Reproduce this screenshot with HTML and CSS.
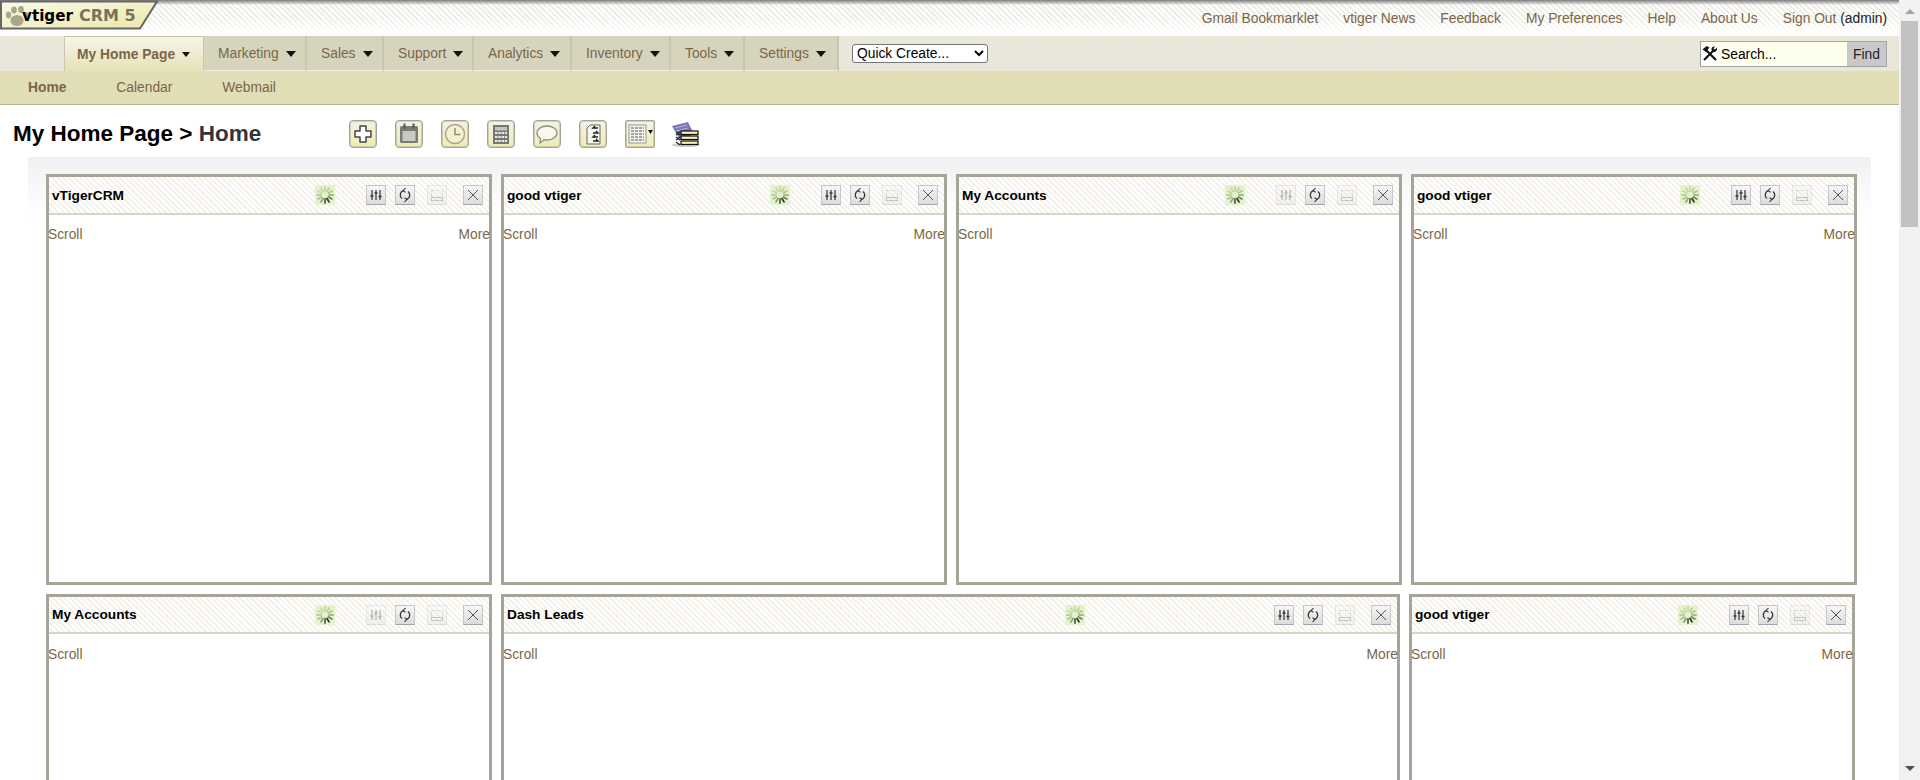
FILE: index.html
```html
<!DOCTYPE html>
<html lang="en">
<head>
    <meta charset="UTF-8">
    <title>vtiger CRM 5 - My Home Page</title>
    <link rel="stylesheet" href="styles.css">
</head>
<body>
<svg class="defs" width="0" height="0">
    <defs>
        <linearGradient id="logofill" x1="0" y1="0" x2="1" y2="1">
            <stop offset="0" stop-color="#fbfaea"/>
            <stop offset="1" stop-color="#ebe7a8"/>
        </linearGradient>
        <g id="spin">
            <rect width="20" height="20" fill="#e4f3cc"/>
            <g stroke-width="1.800" stroke-linecap="round">
                <path d="M10 2v4" stroke="#c3d6a9"/>
                <path d="M14 3.100l-2 3.400" stroke="#b9cf9d"/>
                <path d="M16.900 6l-3.400 2" stroke="#b0c792"/>
                <path d="M18 10h-4" stroke="#a4bc88"/>
                <path d="M16.900 14l-3.400-2" stroke="#6f8560"/>
                <path d="M14 16.900l-2-3.400" stroke="#2f3a2a"/>
                <path d="M10 18v-4" stroke="#55654a"/>
                <path d="M6 16.900l2-3.400" stroke="#8aa274"/>
                <path d="M3.100 14l3.400-2" stroke="#a9c48a"/>
                <path d="M2 10h4" stroke="#b9cf9d"/>
                <path d="M3.100 6l3.400 2" stroke="#c3d6a9"/>
                <path d="M6 3.100l2 3.400" stroke="#c3d6a9"/>
            </g>
        </g>
        <g id="btn-tune">
            <path d="M6 5v10M10 5v10M14 5v10" stroke="#333" stroke-width="1.200" fill="none"/>
            <path d="M4.500 11h3M8.500 8h3M12.500 11.500h3" stroke="#333" stroke-width="1.600" fill="none"/>
        </g>
        <g id="btn-refresh" fill="none" stroke="#333" stroke-width="1.300">
            <path d="M7 13.500a4.600 4.600 0 0 1 1-7.800"/>
            <path d="M13 6.500a4.600 4.600 0 0 1-1 7.800"/>
            <path d="M10.500 3l-2.500 2.700 2.500 1.600M9.500 17l2.500-2.700-2.500-1.600" stroke-width="1.100"/>
        </g>
        <g id="btn-min" fill="none" stroke="#666">
            <path d="M5 5.500h10M4.500 5.500v6M15.500 5.500v6" stroke-dasharray="1 1.500"/>
            <rect x="4.500" y="12.500" width="11" height="3" fill="#e8e8e8"/>
        </g>
        <g id="btn-close" stroke="#555" stroke-width="1" fill="none">
            <path d="M5 5l10 10M15 5L5 15"/>
        </g>
    </defs>
</svg>

<div class="page">
    <div class="main">
        <!-- top bar -->
        <div class="topbar">
            <div class="logo">
                <svg class="logo-bg" width="160" height="31" viewBox="0 0 160 31">
                    <path d="M1 1.500H157L140 28.500H1z" fill="url(#logofill)" stroke="#666" stroke-width="2"/>
                </svg>
                <svg class="paw" width="24" height="22" viewBox="0 0 24 22">
                    <g fill="#a9a68c">
                        <ellipse cx="12" cy="15.500" rx="6.500" ry="5.500"/>
                        <ellipse cx="3.500" cy="10" rx="2.600" ry="3.400"/>
                        <ellipse cx="9" cy="5" rx="2.800" ry="3.600"/>
                        <ellipse cx="16" cy="4.500" rx="2.800" ry="3.400"/>
                        <ellipse cx="21" cy="10" rx="2.300" ry="3"/>
                    </g>
                </svg>
                <span class="logo-name">vtiger</span>
                <span class="logo-crm">CRM 5</span>
            </div>
            <ul class="toplinks">
                <li><a>Gmail Bookmarklet</a></li>
                <li><a>vtiger News</a></li>
                <li><a>Feedback</a></li>
                <li><a>My Preferences</a></li>
                <li><a>Help</a></li>
                <li><a>About Us</a></li>
                <li><a>Sign Out</a> <span class="who">(admin)</span></li>
            </ul>
        </div>

        <!-- main menu -->
        <div class="menubar">
            <ul class="tabs">
                <li class="on w-home">My Home Page <i class="arrow"></i></li>
                <li class="w-mark">Marketing <i class="arrow"></i></li>
                <li class="w-sales">Sales <i class="arrow"></i></li>
                <li class="w-supp">Support <i class="arrow"></i></li>
                <li class="w-anal">Analytics <i class="arrow"></i></li>
                <li class="w-inv">Inventory <i class="arrow"></i></li>
                <li class="w-tools">Tools <i class="arrow"></i></li>
                <li class="w-set">Settings <i class="arrow"></i></li>
            </ul>
            <select class="quick">
                <option>Quick Create...</option>
            </select>
            <div class="search">
                <svg width="18" height="18" viewBox="0 0 18 18">
                    <path d="M5 5l10 10M13 5L3 15" stroke="#111" stroke-width="2.200" fill="none"/>
                    <path d="M1.500 4.500L5.500 1l3 1.500L5 7z" fill="#111"/>
                    <path d="M16 2.500l-2 2-1.500-1 1.500-2c-2-.5-4 1-3.500 3.500l2 2c2 .5 4-1.500 3.500-4.500z" fill="#111"/>
                </svg>
                <input class="search-box" type="text" value="Search...">
                <button class="find">Find</button>
            </div>
        </div>
        <div class="submenu">
            <a class="on">Home</a>
            <a>Calendar</a>
            <a>Webmail</a>
        </div>

        <!-- heading -->
        <div class="headrow">
            <h1>My Home Page &gt; <span>Home</span></h1>
            <div class="tools">
                <span class="tool"><svg width="28" height="28" viewBox="0 0 28 28"><path d="M11 6h6v5h5v6h-5v5h-6v-5H6v-6h5z" fill="#fff" stroke="#444" stroke-width="1.500" stroke-linejoin="round"/></svg></span>
                <span class="tool"><svg width="28" height="28" viewBox="0 0 28 28"><rect x="5" y="6" width="18" height="17" rx="1.500" fill="#7a7a78"/><rect x="7.500" y="11" width="13" height="10" fill="#c9c9c0"/><path d="M9.500 3.500v5M18.500 3.500v5" stroke="#555" stroke-width="2"/></svg></span>
                <span class="tool"><svg width="28" height="28" viewBox="0 0 28 28"><circle cx="14" cy="14" r="9.500" fill="#f4f1cf" stroke="#a9a78d" stroke-width="1.500"/><path d="M14 8v6.500h5.500" fill="none" stroke="#8f8d78" stroke-width="1.500"/></svg></span>
                <span class="tool"><svg width="28" height="28" viewBox="0 0 28 28"><rect x="6" y="5" width="16" height="19" fill="#777"/><rect x="8" y="7" width="12" height="3.500" fill="#c4c4c4"/><path d="M8 13h12M8 17h12M8 21h12" stroke="#e8e8e0" stroke-width="2" stroke-dasharray="2.500 .8"/></svg></span>
                <span class="tool"><svg width="28" height="28" viewBox="0 0 28 28"><path d="M14 6c5.500 0 10 3 10 7s-4.500 7-10 7c-1 0-2 0-3-.3L7 23l.5-4.500C5 17 4 15 4 13c0-4 4.500-7 10-7z" fill="#f8f8ee" stroke="#8d8d80" stroke-width="1.300"/></svg></span>
                <span class="tool"><svg width="28" height="28" viewBox="0 0 28 28"><path d="M8 8l3-3h10v19H8z" fill="#f6f6f0" stroke="#666"/><path d="M19 8h-5l2-2M14 13h5l-2-2M19 17h-5l2-2M14 21h5l-2-2" fill="none" stroke="#222" stroke-width="1.400"/></svg></span>
                <span class="tool wide"><svg width="30" height="28" viewBox="0 0 30 28"><rect x="4" y="5" width="17" height="18" fill="#f4f4ee" stroke="#999"/><path d="M6 8h13M6 11h13M6 14h13M6 17h13M6 20h13" stroke="#8a8a80" stroke-width="1.300" stroke-dasharray="3 1"/><path d="M23 10h5l-2.500 4z" fill="#111"/></svg></span>
                <span class="tool-plain"><svg width="31" height="28" viewBox="0 0 31 28"><ellipse cx="16" cy="25" rx="14" ry="2" fill="#ccc"/><path d="M2 6l16-4 6 12-14 6z" fill="#7a78b8"/><path d="M5 8l12-3M6 11l12-3" stroke="#b6b5dc"/><g fill="#f6f0b4" stroke="#111" stroke-width="1.200"><rect x="11" y="11" width="17" height="3.500"/><rect x="11" y="16" width="17" height="3.500"/><rect x="11" y="21" width="17" height="3.500"/></g><path d="M6 12l4 3M10 12l-4 3M6 17l4 3M10 17l-4 3M6 22l4 3" stroke="#222" stroke-width="1.200"/></svg></span>
            </div>
        </div>

        <!-- widgets -->
        <div class="board">
            <div class="row">
                <div class="widget w1">
                    <div class="wtitle"><b>vTigerCRM</b>
                        <svg class="spin" width="20" height="20"><use href="#spin"/></svg>
                        <span class="wbtns">
                            <span class="wbtn"><svg width="20" height="20"><use href="#btn-tune"/></svg></span>
                            <span class="wbtn"><svg width="20" height="20"><use href="#btn-refresh"/></svg></span>
                            <span class="wbtn off"><svg width="20" height="20"><use href="#btn-min"/></svg></span>
                            <span class="wbtn"><svg width="20" height="20"><use href="#btn-close"/></svg></span>
                        </span>
                    </div>
                    <div class="wlinks"><a>Scroll</a><a>More</a></div>
                </div>
                <div class="widget w1">
                    <div class="wtitle"><b>good vtiger</b>
                        <svg class="spin" width="20" height="20"><use href="#spin"/></svg>
                        <span class="wbtns">
                            <span class="wbtn"><svg width="20" height="20"><use href="#btn-tune"/></svg></span>
                            <span class="wbtn"><svg width="20" height="20"><use href="#btn-refresh"/></svg></span>
                            <span class="wbtn off"><svg width="20" height="20"><use href="#btn-min"/></svg></span>
                            <span class="wbtn"><svg width="20" height="20"><use href="#btn-close"/></svg></span>
                        </span>
                    </div>
                    <div class="wlinks"><a>Scroll</a><a>More</a></div>
                </div>
                <div class="widget w1">
                    <div class="wtitle"><b>My Accounts</b>
                        <svg class="spin" width="20" height="20"><use href="#spin"/></svg>
                        <span class="wbtns">
                            <span class="wbtn off"><svg width="20" height="20"><use href="#btn-tune"/></svg></span>
                            <span class="wbtn"><svg width="20" height="20"><use href="#btn-refresh"/></svg></span>
                            <span class="wbtn off"><svg width="20" height="20"><use href="#btn-min"/></svg></span>
                            <span class="wbtn"><svg width="20" height="20"><use href="#btn-close"/></svg></span>
                        </span>
                    </div>
                    <div class="wlinks"><a>Scroll</a></div>
                </div>
                <div class="widget w1">
                    <div class="wtitle"><b>good vtiger</b>
                        <svg class="spin" width="20" height="20"><use href="#spin"/></svg>
                        <span class="wbtns">
                            <span class="wbtn"><svg width="20" height="20"><use href="#btn-tune"/></svg></span>
                            <span class="wbtn"><svg width="20" height="20"><use href="#btn-refresh"/></svg></span>
                            <span class="wbtn off"><svg width="20" height="20"><use href="#btn-min"/></svg></span>
                            <span class="wbtn"><svg width="20" height="20"><use href="#btn-close"/></svg></span>
                        </span>
                    </div>
                    <div class="wlinks"><a>Scroll</a><a>More</a></div>
                </div>
            </div>
            <div class="row">
                <div class="widget w1 tall">
                    <div class="wtitle"><b>My Accounts</b>
                        <svg class="spin" width="20" height="20"><use href="#spin"/></svg>
                        <span class="wbtns">
                            <span class="wbtn off"><svg width="20" height="20"><use href="#btn-tune"/></svg></span>
                            <span class="wbtn"><svg width="20" height="20"><use href="#btn-refresh"/></svg></span>
                            <span class="wbtn off"><svg width="20" height="20"><use href="#btn-min"/></svg></span>
                            <span class="wbtn"><svg width="20" height="20"><use href="#btn-close"/></svg></span>
                        </span>
                    </div>
                    <div class="wlinks"><a>Scroll</a></div>
                </div>
                <div class="widget w2 tall">
                    <div class="wtitle"><b>Dash Leads</b>
                        <svg class="spin" width="20" height="20"><use href="#spin"/></svg>
                        <span class="wbtns">
                            <span class="wbtn"><svg width="20" height="20"><use href="#btn-tune"/></svg></span>
                            <span class="wbtn"><svg width="20" height="20"><use href="#btn-refresh"/></svg></span>
                            <span class="wbtn off"><svg width="20" height="20"><use href="#btn-min"/></svg></span>
                            <span class="wbtn"><svg width="20" height="20"><use href="#btn-close"/></svg></span>
                        </span>
                    </div>
                    <div class="wlinks"><a>Scroll</a><a>More</a></div>
                </div>
                <div class="widget w1 tall">
                    <div class="wtitle"><b>good vtiger</b>
                        <svg class="spin" width="20" height="20"><use href="#spin"/></svg>
                        <span class="wbtns">
                            <span class="wbtn"><svg width="20" height="20"><use href="#btn-tune"/></svg></span>
                            <span class="wbtn"><svg width="20" height="20"><use href="#btn-refresh"/></svg></span>
                            <span class="wbtn off"><svg width="20" height="20"><use href="#btn-min"/></svg></span>
                            <span class="wbtn"><svg width="20" height="20"><use href="#btn-close"/></svg></span>
                        </span>
                    </div>
                    <div class="wlinks"><a>Scroll</a><a>More</a></div>
                </div>
            </div>
        </div>
    </div>

    <!-- page scrollbar -->
    <div class="scrollbar">
        <i class="sb-up"></i>
        <div class="sb-thumb"></div>
        <i class="sb-down"></i>
    </div>
</div>
</body>
</html>
```

FILE: styles.css
```css
*{
    margin: 0;
    padding: 0;
    box-sizing: border-box;
}
ul{
    list-style: none;
}
html,body{
    height: 100%;
    overflow: hidden;
}
body{
    font-family: "Liberation Sans", Arial, sans-serif;
    font-size: 13.8px;
    color: #000;
    background: #fff;
}
a{
    color: #7b6648;
    cursor: pointer;
}
.defs{
    position: absolute;
}
.page{
    display: flex;
    height: 780px;
}
.main{
    width: 1899px;
    height: 780px;
    overflow: hidden;
}

/* top bar */
.topbar{
    height: 36px;
    display: flex;
    justify-content: space-between;
    background:
        linear-gradient(#7e7e7e, rgba(255,255,255,0) 5px),
        linear-gradient(rgba(255,255,255,0) 18px, #fff 34px),
        repeating-linear-gradient(45deg, #fff, #fff 2px, #eeede6 2px, #eeede6 4px);
}
.logo{
    width: 160px;
    height: 31px;
    display: flex;
    align-items: center;
    padding-left: 5px;
    position: relative;
}
.logo-bg{
    position: absolute;
    left: 0;
    top: 0;
}
.paw{
    flex: none;
    position: relative;
    margin-right: -7px;
}
.logo-name{
    position: relative;
    font-family: "DejaVu Sans", sans-serif;
    font-weight: 700;
    font-size: 15.200px;
    color: #000;
    margin-right: 6px;
}
.logo-crm{
    position: relative;
    font-family: "DejaVu Sans", sans-serif;
    font-weight: 700;
    font-size: 16px;
    color: #77725f;
}
.toplinks{
    display: flex;
    gap: 25px;
    padding: 11px 12px 0 0;
}
.who{
    color: #222;
}

/* menu */
.menubar{
    height: 35px;
    background: #e9e7da;
    display: flex;
    align-items: flex-start;
    padding-left: 64px;
}
.tabs{
    display: flex;
    height: 35px;
}
.tabs li{
    display: flex;
    align-items: center;
    gap: 7px;
    padding: 1px 0 0 14px;
    color: #7b6648;
    background: #d6d4bc;
    border-right: 2px solid #c8c6ae;
    border-bottom: 1px solid #efeee2;
}
.tabs li.on{
    padding: 1px 0 0 12px;
    font-weight: bold;
    background: linear-gradient(#f6f4e8, #e6e2b8);
    border-top: 1px solid #c9bfa0;
    border-left: 1px solid #c8c6ae;
    border-right: 1px solid #c8c6ae;
    border-bottom: 0;
}
.w-home{ width: 140px; }
.w-mark{ width: 103px; }
.w-sales{ width: 77px; }
.w-supp{ width: 90px; }
.w-anal{ width: 98px; }
.w-inv{ width: 99px; }
.w-tools{ width: 74px; }
.w-set{ width: 94px; }
.arrow{
    width: 0;
    height: 0;
    border-left: 5px solid transparent;
    border-right: 5px solid transparent;
    border-top: 6px solid #111;
}
.on .arrow{
    border-left-width: 4px;
    border-right-width: 4px;
    border-top-width: 5px;
}
.quick{
    width: 136px;
    height: 19px;
    margin: 8px 0 0 13px;
    font-family: "Liberation Sans", Arial, sans-serif;
    font-size: 13.800px;
    background: #fff;
    border: 1px solid #767676;
    border-radius: 3px;
}
.search{
    display: flex;
    align-items: center;
    width: 187px;
    height: 26px;
    margin: 5px 12px 0 auto;
    border: 1px solid #a3a3a3;
    background: #fefeec;
}
.search svg{
    flex: none;
    background: #fff;
}
.search-box{
    width: 128px;
    height: 24px;
    padding-left: 2px;
    border: 0;
    outline: 0;
    font-family: "Liberation Sans", Arial, sans-serif;
    font-size: 13.800px;
    background: transparent;
}
.find{
    width: 39px;
    height: 24px;
    border: 0;
    font-family: "Liberation Sans", Arial, sans-serif;
    font-size: 13.800px;
    color: #222;
    background: #c8c8c8;
}
.submenu{
    height: 34px;
    display: flex;
    align-items: center;
    padding-left: 28px;
    gap: 50px;
    border-bottom: 1px solid #b5b48c;
    background: repeating-linear-gradient(45deg, #e0dcb4, #e0dcb4 2px, #e3dfb9 2px, #e3dfb9 4px);
}
.submenu .on{
    font-weight: bold;
}

/* heading */
.headrow{
    height: 52px;
    display: flex;
    align-items: flex-start;
}
h1{
    width: 349px;
    padding: 15px 0 0 13px;
    font-size: 22.500px;
    line-height: 28px;
}
h1 span{
    color: #33323f;
}
.tools{
    display: flex;
    gap: 18px;
    padding-top: 15px;
}
.tool{
    display: block;
    width: 28px;
    height: 28px;
    border: 1px solid #a5a596;
    box-shadow: inset 0 0 0 1px rgba(165,165,150,.45);
    border-radius: 4px;
    background: linear-gradient(#f3f2e6, #efecb4);
    overflow: hidden;
}
.tool svg{
    display: block;
    margin: -1px;
}
.tool.wide{
    width: 30px;
    border-radius: 2px;
}
.tool-plain{
    display: block;
    height: 28px;
    margin-left: -3px;
}

/* widgets */
.board{
    margin: 0 28px;
    padding: 17px 0 0 18px;
    background: linear-gradient(#f1f1f1, #fff 60px);
}
.row{
    display: flex;
    gap: 9px;
    margin-bottom: 9px;
}
.widget{
    height: 411px;
    border: 3px solid #a7a598;
    background: #fff;
    flex: none;
}
.widget.tall{
    height: 420px;
}
.w1{
    width: 446px;
}
.w2{
    width: 899px;
}
.wtitle{
    height: 38px;
    display: flex;
    align-items: center;
    padding: 0 6px 0 3px;
    border-bottom: 2px solid #d8d6c8;
    background: repeating-linear-gradient(45deg, #fff, #fff 2px, #f4f2ea 2px, #f4f2ea 4px);
}
.row + .row .wtitle{
    height: 37px;
}
.wtitle b{
    font-size: 13.700px;
    flex: 1;
}
.spin{
    flex: none;
    margin-right: 31px;
}
.w2 .spin{
    margin-right: 189px;
}
.wbtns{
    display: flex;
    gap: 9px;
}
.wbtn{
    display: block;
    width: 20px;
    height: 20px;
    border: 1px solid #c6c6c6;
    border-bottom-color: #a5a5a5;
    background: linear-gradient(#f6f6f6, #dcdcdc);
}
.wbtn svg{
    display: block;
    margin: -1px;
}
.wbtn:nth-child(3){
    margin-left: 3px;
}
.wbtn:nth-child(4){
    margin-left: 7px;
}
.wbtn.off{
    opacity: .35;
}
.wlinks{
    display: flex;
    justify-content: space-between;
    margin: 0 -1px;
    padding-top: 12px;
}
.row + .row .wlinks{
    padding-top: 13px;
}

/* scrollbar */
.scrollbar{
    width: 21px;
    height: 780px;
    background: #f1f1f1;
    display: flex;
    flex-direction: column;
    align-items: center;
}
.sb-up,.sb-down{
    width: 0;
    height: 0;
    border-left: 5px solid transparent;
    border-right: 5px solid transparent;
}
.sb-up{
    margin-top: 9px;
    border-bottom: 5px solid #a3a3a3;
}
.sb-thumb{
    width: 17px;
    height: 206px;
    margin-top: 7px;
    background: #c1c1c1;
}
.sb-down{
    margin-top: auto;
    margin-bottom: 9px;
    border-top: 5px solid #505050;
}
```
